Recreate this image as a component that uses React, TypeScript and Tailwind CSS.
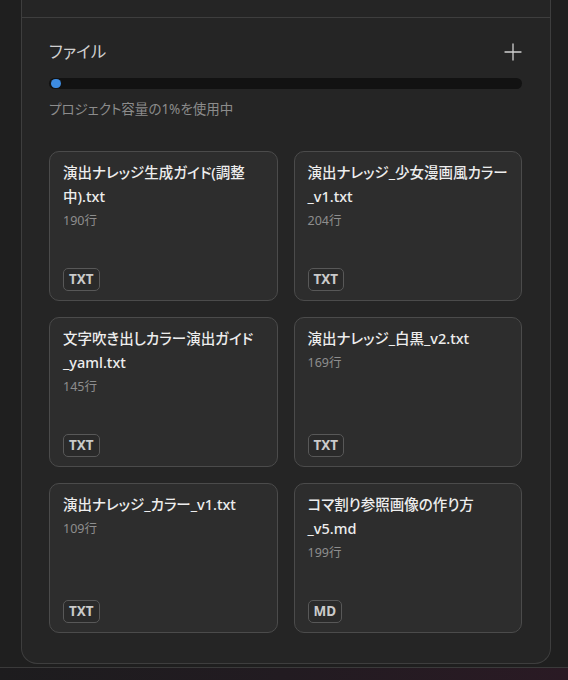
const files = [
  { name: "演出ナレッジ生成ガイド(調整中).txt", lines: 190, kind: "TXT" },
  { name: "演出ナレッジ_少女漫画風カラー_v1.txt", lines: 204, kind: "TXT" },
  { name: "文字吹き出しカラー演出ガイド_yaml.txt", lines: 145, kind: "TXT" },
  { name: "演出ナレッジ_白黒_v2.txt", lines: 169, kind: "TXT" },
  { name: "演出ナレッジ_カラー_v1.txt", lines: 109, kind: "TXT" },
  { name: "コマ割り参照画像の作り方_v5.md", lines: 199, kind: "MD" },
];

function PlusIcon() {
  return (
    <svg width="18" height="18" viewBox="0 0 18 18" fill="none" stroke="#cfcfcf" strokeWidth="1.3" strokeLinecap="round">
      <path d="M9 1v16M1 9h16" />
    </svg>
  );
}

function FileCard({ name, lines, kind }: { name: string; lines: number; kind: string }) {
  return (
    <div className="h-[150px] flex flex-col rounded-[10px] border border-[#4b4b4b] bg-[#2d2d2d] px-[13px] pt-[8px] pb-[9px]">
      <p className="text-[14.5px] leading-[24px] font-medium text-[#ededed] break-words">{name}</p>
      <p className="mt-[5px] text-[12.5px] leading-[16px] text-[#8e8e8e]">{lines}行</p>
      <div className="mt-auto">
        <span className="inline-flex h-[23px] items-center rounded-[5px] border border-[#585858] bg-[#2a2a2a] px-[5px] text-[13.5px] font-bold text-[#cacaca]">
          {kind}
        </span>
      </div>
    </div>
  );
}

export default function App() {
  return (
    <div
      className="h-[680px] w-full flex flex-col overflow-hidden bg-[#1f1f1f] [font-feature-settings:'palt'] font-['Noto_Sans','Noto_Sans_CJK_JP',sans-serif]"
    >
      <div className="pl-[21px] pr-[17px]">
        <div className="border-x border-b border-[#3e3e3e] rounded-b-[16px] bg-[#252525]">
          <div className="h-[18px] border-b border-[#3e3e3e]" />
          <div className="pl-[27px] pr-[28px] pt-[22px] pb-[30px]">
            <div className="flex h-6 items-center justify-between">
              <h2 className="text-[16.5px] text-[#d0d0d0]">ファイル</h2>
              <PlusIcon />
            </div>
            <div className="mt-[14px] h-[11px] rounded-full bg-[#121212] p-[1px] flex items-center">
              <div className="h-[9px] w-[10px] ml-[1px] rounded-full bg-[#3d8be0]" />
            </div>
            <p className="mt-[10px] text-[13.5px] leading-5 text-[#8c8c8c]">プロジェクト容量の1%を使用中</p>
            <div className="mt-[32px] grid grid-cols-2 gap-4">
              {files.map((f) => (
                <FileCard key={f.name} {...f} />
              ))}
            </div>
          </div>
        </div>
      </div>
      <div className="mt-[3px] h-px bg-[#3a3a3a]" />
      <div className="flex-1 bg-gradient-to-r from-[#1d1c1e] via-[#221b21] to-[#2a1a24]" />
    </div>
  );
}
